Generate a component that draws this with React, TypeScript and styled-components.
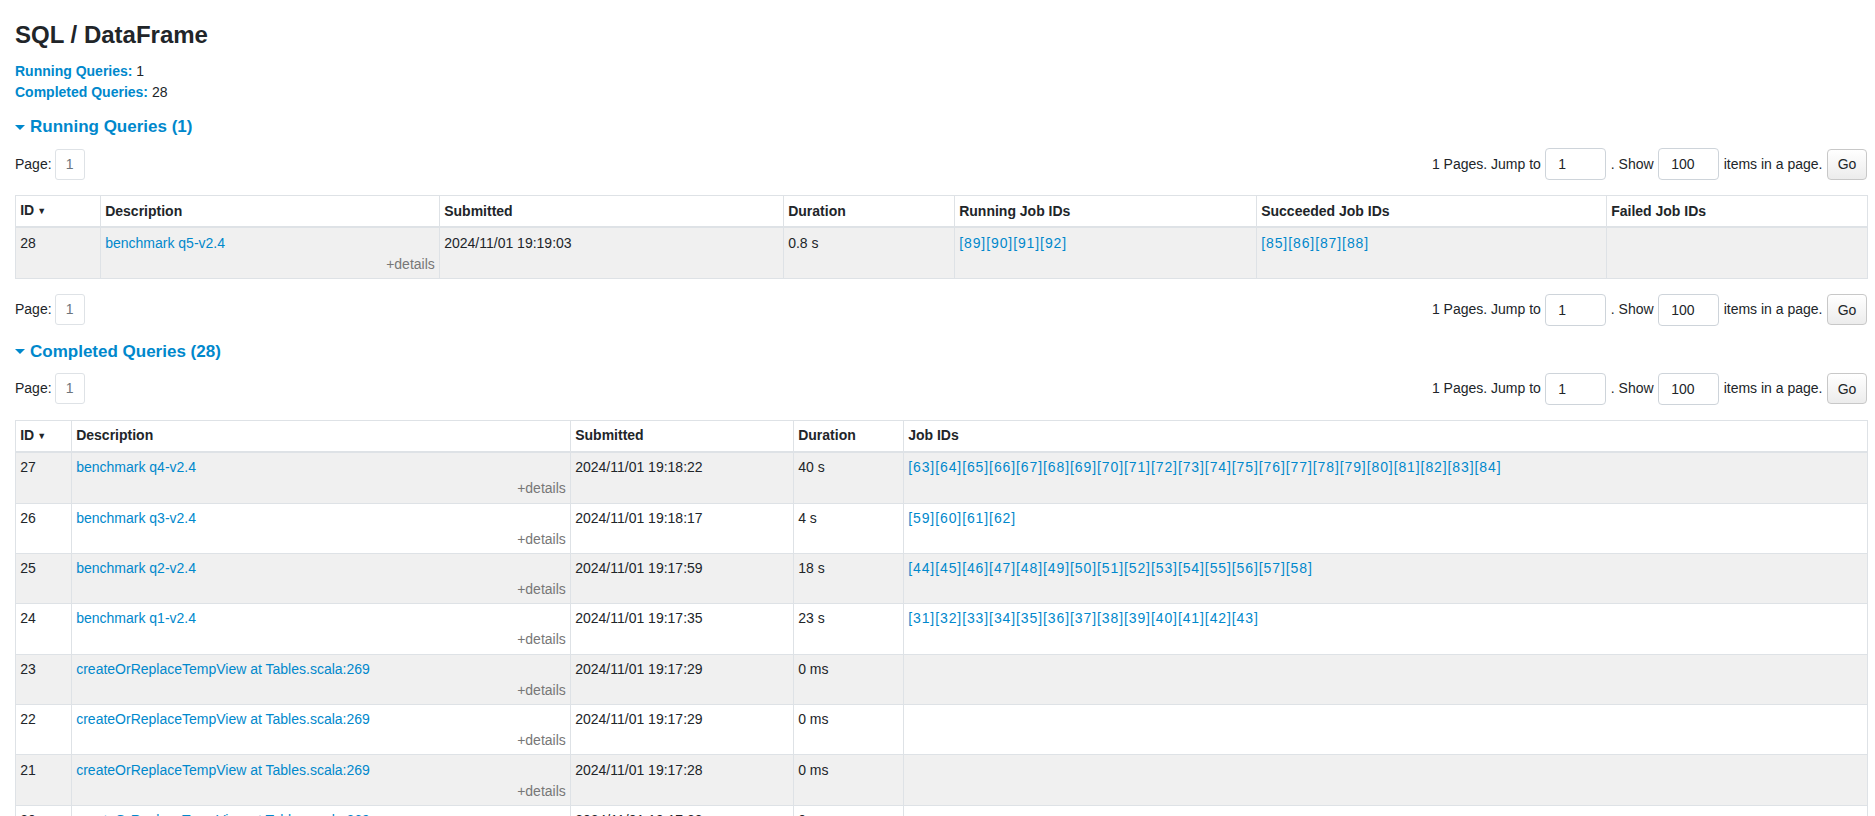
import React from 'react';
import styled, { createGlobalStyle } from 'styled-components';

const GlobalStyle = createGlobalStyle`
body {
    margin: 0;
    background: #ffffff;
    color: #212529;
    font-family: "Liberation Sans", Arial, Helvetica, sans-serif;
    font-size: 14px;
    line-height: 21px;
}
`;

const LINK = '#0088cc';
const BORDER = '#dee2e6';

const Page = styled.div`
display: flex;
flex-direction: column;
padding: 0 8px 0 15px;
`;

const Title = styled.h3`
margin: 20px 0 0;
font-size: 24px;
line-height: 29px;
font-weight: 700;
`;

const SummaryList = styled.ul`
list-style: none;
margin: 12px 0 0;
padding: 0;
`;

const SummaryLabel = styled.strong`
color: ${LINK};
`;

const SectionHeading = styled.h4<{ top: number }>`
display: flex;
align-items: center;
gap: 5px;
margin: ${({ top }) => top}px 0 0;
font-size: 17px;
line-height: 24px;
font-weight: 700;
color: ${LINK};
`;

const Caret = styled.span`
width: 0;
height: 0;
border-left: 5px solid transparent;
border-right: 5px solid transparent;
border-top: 5px solid ${LINK};
`;

const PagerRow = styled.div<{ top: number }>`
display: flex;
align-items: center;
justify-content: space-between;
height: 32px;
margin-top: ${({ top }) => top}px;
`;

const PageLeft = styled.div`
display: flex;
align-items: center;
gap: 3px;
`;

const PageBox = styled.span`
display: flex;
align-items: center;
justify-content: center;
width: 28px;
height: 29px;
border: 1px solid ${BORDER};
border-radius: 3px;
color: #6c757d;
`;

const PageForm = styled.div`
display: flex;
align-items: center;
gap: 4.5px;
`;

const PageInput = styled.input`
box-sizing: border-box;
width: 61px;
height: 32px;
padding: 0 12px;
border: 1px solid #ced4da;
border-radius: 4px;
font-family: inherit;
font-size: 14px;
color: #212529;
`;

const GoButton = styled.button`
box-sizing: border-box;
width: 40px;
height: 31px;
padding: 0;
border: 1px solid #c8c8c8;
border-radius: 4px;
background: linear-gradient(#ffffff, #ececec);
font-family: inherit;
font-size: 14px;
color: #212529;
`;

const Table = styled.table`
width: 100%;
margin-top: 15px;
border-collapse: collapse;
table-layout: fixed;
border: 1px solid ${BORDER};
`;

const HeadCell = styled.th`
padding: 4.2px;
border: 1px solid ${BORDER};
border-bottom-width: 2px;
text-align: left;
font-weight: 700;
white-space: nowrap;
overflow: hidden;
`;

const SortArrow = styled.span`
font-size: 9px;
margin-left: 3px;
vertical-align: 1px;
`;

const Row = styled.tr<{ striped: boolean }>`
background: ${({ striped }) => (striped ? '#f0f0f0' : '#ffffff')};
`;

const Cell = styled.td`
padding: 4.2px;
border: 1px solid ${BORDER};
vertical-align: top;
`;

const Link = styled.a`
color: ${LINK};
text-decoration: none;
`;

const JobLink = styled.a`
color: ${LINK};
text-decoration: none;
letter-spacing: 0.9px;
`;

const Details = styled.div`
text-align: right;
color: #777777;
line-height: 20px;
`;

interface IQuery {
    id: number;
    desc: string;
    submitted: string;
    duration: string;
    jobs: number[];
}

const range = (a: number, b: number) => Array.from({ length: b - a + 1 }, (_, i) => a + i);

const completed: IQuery[] = [
    { id: 27, desc: 'benchmark q4-v2.4', submitted: '2024/11/01 19:18:22', duration: '40 s', jobs: range(63, 84) },
    { id: 26, desc: 'benchmark q3-v2.4', submitted: '2024/11/01 19:18:17', duration: '4 s', jobs: range(59, 62) },
    { id: 25, desc: 'benchmark q2-v2.4', submitted: '2024/11/01 19:17:59', duration: '18 s', jobs: range(44, 58) },
    { id: 24, desc: 'benchmark q1-v2.4', submitted: '2024/11/01 19:17:35', duration: '23 s', jobs: range(31, 43) },
    { id: 23, desc: 'createOrReplaceTempView at Tables.scala:269', submitted: '2024/11/01 19:17:29', duration: '0 ms', jobs: [] },
    { id: 22, desc: 'createOrReplaceTempView at Tables.scala:269', submitted: '2024/11/01 19:17:29', duration: '0 ms', jobs: [] },
    { id: 21, desc: 'createOrReplaceTempView at Tables.scala:269', submitted: '2024/11/01 19:17:28', duration: '0 ms', jobs: [] },
    { id: 20, desc: 'createOrReplaceTempView at Tables.scala:269', submitted: '2024/11/01 19:17:28', duration: '0 ms', jobs: [] },
    { id: 19, desc: 'createOrReplaceTempView at Tables.scala:269', submitted: '2024/11/01 19:17:28', duration: '0 ms', jobs: [] },
];

const JobList: React.FC<{ jobs: number[] }> = ({ jobs }) => (
    <>
        {jobs.map((j) => <JobLink key={j} href="#">[{j}]</JobLink>)}
    </>
);

const Pager: React.FC<{ top: number }> = ({ top }) => (
    <PagerRow top={top}>
        <PageLeft>
            <span>Page:</span>
            <PageBox>1</PageBox>
        </PageLeft>
        <PageForm>
            <span>1 Pages. Jump to</span>
            <PageInput defaultValue="1" />
            <span>. Show</span>
            <PageInput defaultValue="100" />
            <span>items in a page.</span>
            <GoButton>Go</GoButton>
        </PageForm>
    </PagerRow>
);

const DescCell: React.FC<{ text: string }> = ({ text }) => (
    <Cell>
        <Link href="#">{text}</Link>
        <Details>+details</Details>
    </Cell>
);

const App: React.FC = () => {
    return (
        <Page>
            <GlobalStyle />
            <Title>SQL / DataFrame</Title>
            <SummaryList>
                <li><SummaryLabel>Running Queries:</SummaryLabel> 1</li>
                <li><SummaryLabel>Completed Queries:</SummaryLabel> 28</li>
            </SummaryList>

            <SectionHeading top={12}><Caret />Running Queries (1)</SectionHeading>
            <Pager top={9} />
            <Table>
                <colgroup>
                    <col style={{ width: 85 }} />
                    <col style={{ width: 339 }} />
                    <col style={{ width: 344 }} />
                    <col style={{ width: 171 }} />
                    <col style={{ width: 302 }} />
                    <col style={{ width: 350 }} />
                    <col style={{ width: 261 }} />
                </colgroup>
                <thead>
                    <tr>
                        <HeadCell>ID<SortArrow>▼</SortArrow></HeadCell>
                        <HeadCell>Description</HeadCell>
                        <HeadCell>Submitted</HeadCell>
                        <HeadCell>Duration</HeadCell>
                        <HeadCell>Running Job IDs</HeadCell>
                        <HeadCell>Succeeded Job IDs</HeadCell>
                        <HeadCell>Failed Job IDs</HeadCell>
                    </tr>
                </thead>
                <tbody>
                    <Row striped>
                        <Cell>28</Cell>
                        <DescCell text="benchmark q5-v2.4" />
                        <Cell>2024/11/01 19:19:03</Cell>
                        <Cell>0.8 s</Cell>
                        <Cell><JobList jobs={range(89, 92)} /></Cell>
                        <Cell><JobList jobs={range(85, 88)} /></Cell>
                        <Cell />
                    </Row>
                </tbody>
            </Table>
            <Pager top={15} />

            <SectionHeading top={14}><Caret />Completed Queries (28)</SectionHeading>
            <Pager top={9} />
            <Table>
                <colgroup>
                    <col style={{ width: 56 }} />
                    <col style={{ width: 499 }} />
                    <col style={{ width: 223 }} />
                    <col style={{ width: 110 }} />
                    <col style={{ width: 964 }} />
                </colgroup>
                <thead>
                    <tr>
                        <HeadCell>ID<SortArrow>▼</SortArrow></HeadCell>
                        <HeadCell>Description</HeadCell>
                        <HeadCell>Submitted</HeadCell>
                        <HeadCell>Duration</HeadCell>
                        <HeadCell>Job IDs</HeadCell>
                    </tr>
                </thead>
                <tbody>
                    {completed.map((q, i) => (
                        <Row key={q.id} striped={i % 2 === 0}>
                            <Cell>{q.id}</Cell>
                            <DescCell text={q.desc} />
                            <Cell>{q.submitted}</Cell>
                            <Cell>{q.duration}</Cell>
                            <Cell><JobList jobs={q.jobs} /></Cell>
                        </Row>
                    ))}
                </tbody>
            </Table>
        </Page>
    );
};

export default App;
